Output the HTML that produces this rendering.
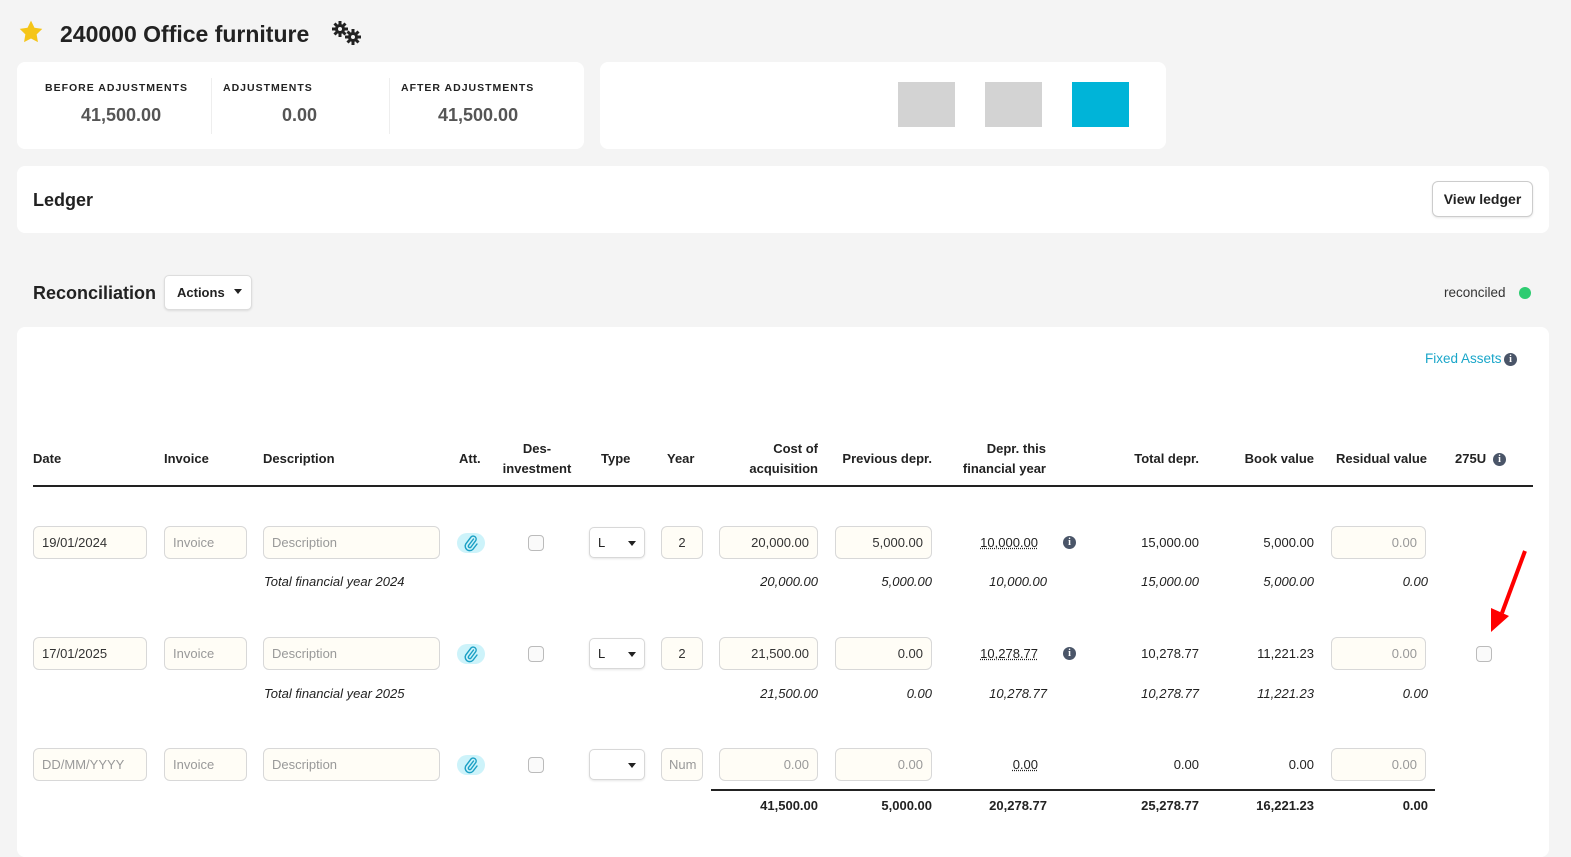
<!DOCTYPE html>
<html><head><meta charset="utf-8"><style>
*{box-sizing:border-box;margin:0;padding:0}
body{width:1571px;height:846px;background:#f4f4f4;font-family:"Liberation Sans",sans-serif;color:#222;position:relative;overflow:hidden}
.a{position:absolute}
.card{position:absolute;background:#fff;border-radius:8px}
.lbl{font-size:10.5px;font-weight:bold;letter-spacing:1px;color:#222}
.val{font-size:18px;color:#555;font-weight:bold}
.th{position:absolute;font-size:13px;font-weight:bold;color:#222;line-height:20px}
.in{position:absolute;height:33px;border:1px solid #d8d8d8;border-radius:6px;background:#fffdf6;font-size:13px;line-height:31px;padding:0 8px;color:#333}
.ph{color:#999}
.r{text-align:right}
.t{position:absolute;font-size:13px;text-align:right}
.it{font-style:italic}
.cb{position:absolute;width:16px;height:16px;border:1px solid #bbb;border-radius:4px;background:#fafafa}
.clip{position:absolute;width:28px;height:20px;border-radius:10px;background:#cdf3fa}
.sel{position:absolute;height:31px;border:1px solid #d8d8d8;border-radius:5px;background:#fff;font-size:13px;line-height:30px;padding:0 8px;box-shadow:0 1px 2px rgba(0,0,0,.1)}
.sel:after{content:"";position:absolute;right:8px;top:13px;border:4px solid transparent;border-top:5px solid #222}
.info{position:absolute;width:13px;height:13px;border-radius:50%;background:#4a5568;color:#fff;font-size:10px;font-weight:bold;text-align:center;line-height:13px;font-family:"Liberation Serif",serif}
.dot{text-decoration:underline dotted}
</style></head><body>
<svg class="a" style="left:17px;top:19px" width="28" height="26" viewBox="0 0 24 24"><path d="M12 1.5l3.2 6.6 7.2 1-5.2 5.1 1.2 7.2L12 18l-6.4 3.4 1.2-7.2L1.6 9.1l7.2-1z" fill="#f5c518"/></svg>
<div class="a" style="left:60px;top:21px;font-size:23px;font-weight:bold;color:#222">240000 Office furniture</div>
<svg class="a" style="left:331px;top:20px" width="32" height="26" viewBox="0 0 32 26">
<g fill="#222"><circle cx="9" cy="9" r="5"/><g stroke="#222" stroke-width="3"><path d="M9 1v16M1 9h16M3.5 3.5l11 11M14.5 3.5l-11 11"/></g><circle cx="9" cy="9" r="2" fill="#f4f4f4"/>
<circle cx="22" cy="17" r="5"/><g stroke="#222" stroke-width="3"><path d="M22 9v16M14 17h16M16.5 11.5l11 11M27.5 11.5l-11 11"/></g><circle cx="22" cy="17" r="2" fill="#f4f4f4"/></g></svg>

<div class="card" style="left:17px;top:62px;width:567px;height:87px">
 <div class="a lbl" style="left:28px;top:20px">BEFORE ADJUSTMENTS</div>
 <div class="a val" style="left:64px;top:43px">41,500.00</div>
 <div class="a" style="left:194px;top:16px;width:1px;height:56px;background:#eee"></div>
 <div class="a lbl" style="left:206px;top:20px">ADJUSTMENTS</div>
 <div class="a val" style="left:265px;top:43px">0.00</div>
 <div class="a" style="left:372px;top:16px;width:1px;height:56px;background:#eee"></div>
 <div class="a lbl" style="left:384px;top:20px">AFTER ADJUSTMENTS</div>
 <div class="a val" style="left:421px;top:43px">41,500.00</div>
</div>
<div class="card" style="left:600px;top:62px;width:566px;height:87px">
 <div class="a" style="left:298px;top:20px;width:57px;height:45px;background:#d3d3d3"></div>
 <div class="a" style="left:385px;top:20px;width:57px;height:45px;background:#d3d3d3"></div>
 <div class="a" style="left:472px;top:20px;width:57px;height:45px;background:#00b4d8"></div>
</div>

<div class="card" style="left:17px;top:166px;width:1532px;height:67px">
 <div class="a" style="left:16px;top:24px;font-size:18px;font-weight:bold">Ledger</div>
 <div class="a" style="left:1415px;top:15px;width:101px;height:36px;border:1px solid #ccc;border-radius:6px;font-size:14px;font-weight:bold;text-align:center;line-height:34px;box-shadow:0 1px 2px rgba(0,0,0,.1)">View ledger</div>
</div>

<div class="a" style="left:33px;top:283px;font-size:18px;font-weight:bold">Reconciliation</div>
<div class="a" style="left:164px;top:275px;width:88px;height:35px;border:1px solid #ddd;border-radius:5px;background:#fff;font-size:13px;font-weight:bold;line-height:33px;padding-left:12px;box-shadow:0 1px 2px rgba(0,0,0,.1)">Actions <span style="display:inline-block;border:4px solid transparent;border-top:5px solid #222;margin-left:6px;vertical-align:-1px"></span></div>
<div class="a" style="left:1444px;top:285px;font-size:13.5px;color:#333">reconciled</div>
<div class="a" style="left:1519px;top:287px;width:12px;height:12px;border-radius:50%;background:#2ecc71"></div>

<div class="card" style="left:17px;top:327px;width:1532px;height:530px"></div>
<div class="a" style="left:1425px;top:351px;font-size:13.5px;color:#1aa6c9">Fixed Assets</div>
<div class="info" style="left:1504px;top:353px">i</div>

<div class="th" style="left:33px;top:449px">Date</div>
<div class="th" style="left:164px;top:449px">Invoice</div>
<div class="th" style="left:263px;top:449px">Description</div>
<div class="th" style="left:459px;top:449px">Att.</div>
<div class="th" style="left:496px;top:439px;width:82px;text-align:center">Des-<br>investment</div>
<div class="th" style="left:601px;top:449px">Type</div>
<div class="th" style="left:667px;top:449px">Year</div>
<div class="th r" style="left:700px;top:439px;width:118px">Cost of<br>acquisition</div>
<div class="th r" style="left:820px;top:449px;width:112px">Previous depr.</div>
<div class="th r" style="left:930px;top:439px;width:116px">Depr. this<br>financial year</div>
<div class="th r" style="left:1100px;top:449px;width:99px">Total depr.</div>
<div class="th r" style="left:1220px;top:449px;width:94px">Book value</div>
<div class="th r" style="left:1320px;top:449px;width:107px">Residual value</div>
<div class="th" style="left:1455px;top:449px">275U</div>
<div class="info" style="left:1493px;top:453px">i</div>
<div class="a" style="left:33px;top:485px;width:1500px;height:2px;background:#222"></div>

<!-- row 1 -->
<div class="in" style="left:33px;top:526px;width:114px">19/01/2024</div>
<div class="in ph" style="left:164px;top:526px;width:83px">Invoice</div>
<div class="in ph" style="left:263px;top:526px;width:177px">Description</div>
<div class="clip" style="left:457px;top:533px"><svg width="28" height="20" viewBox="0 0 28 20"><path d="M16.5 6l-5 6.5a1.5 1.5 0 0 0 2.3 1.8l5-6.8a3 3 0 0 0-4.7-3.6l-5.3 7a4.5 4.5 0 0 0 7.2 5.3l4-5.2" fill="none" stroke="#1a9fc4" stroke-width="1.4" stroke-linecap="round"/></svg></div>
<div class="cb" style="left:528px;top:535px"></div>
<div class="sel" style="left:589px;top:527px;width:56px">L</div>
<div class="in" style="left:661px;top:526px;width:42px;text-align:center">2</div>
<div class="in r" style="left:719px;top:526px;width:99px">20,000.00</div>
<div class="in r" style="left:835px;top:526px;width:97px">5,000.00</div>
<div class="t dot" style="left:940px;top:535px;width:98px">10,000.00</div>
<div class="info" style="left:1063px;top:536px">i</div>
<div class="t" style="left:1100px;top:535px;width:99px">15,000.00</div>
<div class="t" style="left:1214px;top:535px;width:100px">5,000.00</div>
<div class="in r ph" style="left:1331px;top:526px;width:95px">0.00</div>
<div class="a it" style="left:264px;top:574px;font-size:13px">Total financial year 2024</div>
<div class="t it" style="left:700px;top:574px;width:118px">20,000.00</div>
<div class="t it" style="left:820px;top:574px;width:112px">5,000.00</div>
<div class="t it" style="left:930px;top:574px;width:117px">10,000.00</div>
<div class="t it" style="left:1100px;top:574px;width:99px">15,000.00</div>
<div class="t it" style="left:1214px;top:574px;width:100px">5,000.00</div>
<div class="t it" style="left:1320px;top:574px;width:108px">0.00</div>

<!-- row 2 -->
<div class="in" style="left:33px;top:637px;width:114px">17/01/2025</div>
<div class="in ph" style="left:164px;top:637px;width:83px">Invoice</div>
<div class="in ph" style="left:263px;top:637px;width:177px">Description</div>
<div class="clip" style="left:457px;top:644px"><svg width="28" height="20" viewBox="0 0 28 20"><path d="M16.5 6l-5 6.5a1.5 1.5 0 0 0 2.3 1.8l5-6.8a3 3 0 0 0-4.7-3.6l-5.3 7a4.5 4.5 0 0 0 7.2 5.3l4-5.2" fill="none" stroke="#1a9fc4" stroke-width="1.4" stroke-linecap="round"/></svg></div>
<div class="cb" style="left:528px;top:646px"></div>
<div class="sel" style="left:589px;top:638px;width:56px">L</div>
<div class="in" style="left:661px;top:637px;width:42px;text-align:center">2</div>
<div class="in r" style="left:719px;top:637px;width:99px">21,500.00</div>
<div class="in r" style="left:835px;top:637px;width:97px">0.00</div>
<div class="t dot" style="left:940px;top:646px;width:98px">10,278.77</div>
<div class="info" style="left:1063px;top:647px">i</div>
<div class="t" style="left:1100px;top:646px;width:99px">10,278.77</div>
<div class="t" style="left:1214px;top:646px;width:100px">11,221.23</div>
<div class="in r ph" style="left:1331px;top:637px;width:95px">0.00</div>
<div class="cb" style="left:1476px;top:646px"></div>
<div class="a it" style="left:264px;top:686px;font-size:13px">Total financial year 2025</div>
<div class="t it" style="left:700px;top:686px;width:118px">21,500.00</div>
<div class="t it" style="left:820px;top:686px;width:112px">0.00</div>
<div class="t it" style="left:930px;top:686px;width:117px">10,278.77</div>
<div class="t it" style="left:1100px;top:686px;width:99px">10,278.77</div>
<div class="t it" style="left:1214px;top:686px;width:100px">11,221.23</div>
<div class="t it" style="left:1320px;top:686px;width:108px">0.00</div>

<svg class="a" style="left:1485px;top:548px" width="46" height="86"><path d="M40 3 L17 65" stroke="#f00" stroke-width="4" fill="none"/><path d="M6 60 L6 84 L24 68 Z" fill="#f00"/></svg>

<!-- row 3 -->
<div class="in ph" style="left:33px;top:748px;width:114px">DD/MM/YYYY</div>
<div class="in ph" style="left:164px;top:748px;width:83px">Invoice</div>
<div class="in ph" style="left:263px;top:748px;width:177px">Description</div>
<div class="clip" style="left:457px;top:755px"><svg width="28" height="20" viewBox="0 0 28 20"><path d="M16.5 6l-5 6.5a1.5 1.5 0 0 0 2.3 1.8l5-6.8a3 3 0 0 0-4.7-3.6l-5.3 7a4.5 4.5 0 0 0 7.2 5.3l4-5.2" fill="none" stroke="#1a9fc4" stroke-width="1.4" stroke-linecap="round"/></svg></div>
<div class="cb" style="left:528px;top:757px"></div>
<div class="sel" style="left:589px;top:749px;width:56px"></div>
<div class="in ph" style="left:661px;top:748px;width:42px;padding:0 7px;overflow:hidden">Num</div>
<div class="in r ph" style="left:719px;top:748px;width:99px">0.00</div>
<div class="in r ph" style="left:835px;top:748px;width:97px">0.00</div>
<div class="t dot" style="left:940px;top:757px;width:98px">0.00</div>
<div class="t" style="left:1100px;top:757px;width:99px">0.00</div>
<div class="t" style="left:1214px;top:757px;width:100px">0.00</div>
<div class="in r ph" style="left:1331px;top:748px;width:95px">0.00</div>

<div class="a" style="left:711px;top:789px;width:724px;height:2px;background:#222"></div>
<div class="t" style="left:700px;top:798px;width:118px;font-weight:bold">41,500.00</div>
<div class="t" style="left:820px;top:798px;width:112px;font-weight:bold">5,000.00</div>
<div class="t" style="left:930px;top:798px;width:117px;font-weight:bold">20,278.77</div>
<div class="t" style="left:1100px;top:798px;width:99px;font-weight:bold">25,278.77</div>
<div class="t" style="left:1214px;top:798px;width:100px;font-weight:bold">16,221.23</div>
<div class="t" style="left:1320px;top:798px;width:108px;font-weight:bold">0.00</div>
</body></html>
